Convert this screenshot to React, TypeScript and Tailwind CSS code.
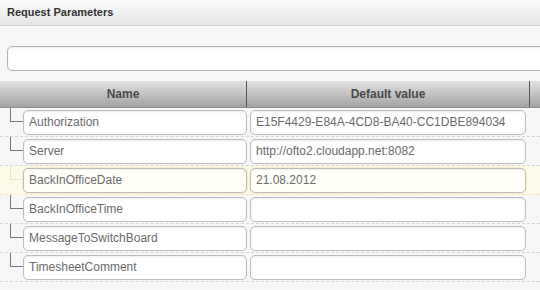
import React from "react";

type Param = { name: string; value: string; selected?: boolean };

const PARAMS: Param[] = [
  { name: "Authorization", value: "E15F4429-E84A-4CD8-BA40-CC1DBE894034" },
  { name: "Server", value: "http://ofto2.cloudapp.net:8082" },
  { name: "BackInOfficeDate", value: "21.08.2012", selected: true },
  { name: "BackInOfficeTime", value: "" },
  { name: "MessageToSwitchBoard", value: "" },
  { name: "TimesheetComment", value: "" },
];

function Field({ text, width, selected }: { text: string; width: string; selected?: boolean }) {
  return (
    <div
      className={`${width} flex h-[25px] shrink-0 items-center rounded-[5px] border border-[#bcbcbc] px-[5px] text-[12px] text-[#6b6b6b] ${
        selected
          ? "bg-[#fffff8] shadow-[0_0_1px_1px_#f5efc8,inset_0_1px_2px_rgba(0,0,0,0.06)]"
          : "bg-white shadow-[inset_0_1px_2px_rgba(0,0,0,0.08)]"
      }`}
    >
      <span className="truncate">{text}</span>
    </div>
  );
}

function ParamRow({ p }: { p: Param }) {
  return (
    <div
      className={`flex h-[29px] items-center border-b border-dashed ${
        p.selected ? "border-[#efe8bb] bg-[#fdfbe8]" : "border-[#d6d6d6]"
      }`}
    >
      <div className="flex h-full w-[23px] shrink-0">
        {/* tree connector */}
        <div
          className={`ml-[10px] h-[14px] w-[13px] border-b border-l ${
            p.selected ? "border-[#ebe5c6]" : "border-[#777]"
          }`}
        />
      </div>
      <Field text={p.name} width="w-[224px]" selected={p.selected} />
      <div className="w-[3px] shrink-0" />
      <Field text={p.value} width="w-[276px]" selected={p.selected} />
    </div>
  );
}

export default function App() {
  return (
    <div className="h-[290px] w-[540px] overflow-hidden bg-[#f7f7f7] font-['Liberation_Sans',Arial,sans-serif]">
      {/* title bar */}
      <div className="flex h-[26px] items-center border-b border-[#cfcfcf] bg-gradient-to-b from-[#fbfbfb] to-[#e5e5e5] pl-[7px] text-[11px] font-bold text-[#333]">
        Request Parameters
      </div>

      {/* search */}
      <div className="h-[55px] overflow-hidden pl-[7px] pt-[20px]">
        <div className="h-[25px] w-[560px] rounded-[5px] border border-[#b4b4b4] bg-white shadow-[inset_0_1px_2px_rgba(0,0,0,0.08)]" />
      </div>

      {/* column header */}
      <div className="flex h-[27px] border-b border-[#8e8e8e] bg-gradient-to-b from-[#e2e2e2] to-[#a3a3a3] text-[12px] font-bold text-[#4a4a4a]">
        <div className="flex w-[246px] items-center justify-center">Name</div>
        <div className="w-px bg-[#555]" />
        <div className="flex w-[282px] items-center justify-center">Default value</div>
        <div className="w-px bg-[#555]" />
        <div className="flex-1" />
      </div>

      {PARAMS.map((p) => (
        <ParamRow key={p.name} p={p} />
      ))}
    </div>
  );
}
